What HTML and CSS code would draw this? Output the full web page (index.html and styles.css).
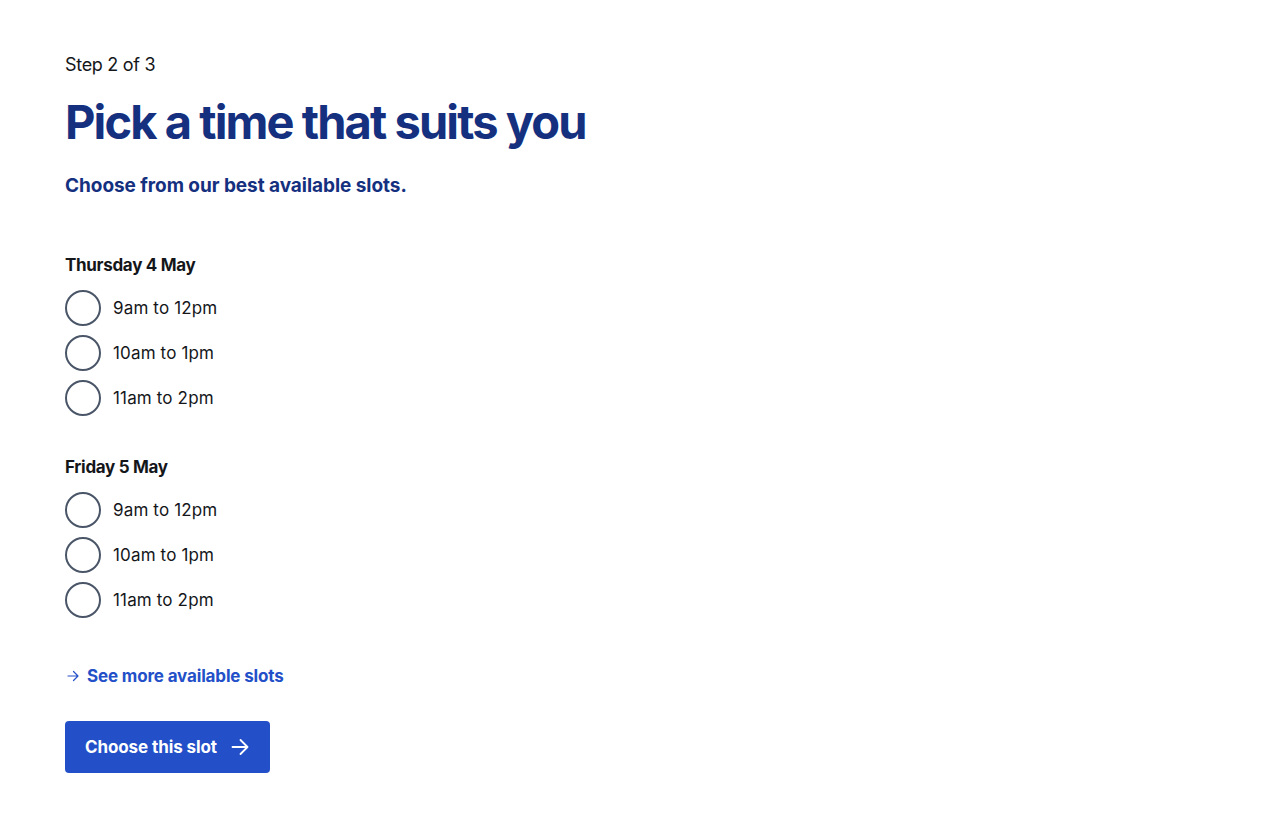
FILE: index.html
```html
<!DOCTYPE html>
<html lang="en">
<head>
<meta charset="utf-8">
<title>Pick a time</title>
<link rel="stylesheet" href="styles.css">
</head>
<body>
<main class="page">
  <p class="step">Step 2 of 3</p>
  <h1 class="title">Pick a time that suits you</h1>
  <p class="lead">Choose from our best available slots.</p>

  <fieldset class="group">
    <legend class="day">Thursday 4 May</legend>
    <label class="slot"><input type="radio" name="slot"><span class="dot"></span><span>9am to 12pm</span></label>
    <label class="slot"><input type="radio" name="slot"><span class="dot"></span><span>10am to 1pm</span></label>
    <label class="slot"><input type="radio" name="slot"><span class="dot"></span><span>11am to 2pm</span></label>
  </fieldset>

  <fieldset class="group">
    <legend class="day">Friday 5 May</legend>
    <label class="slot"><input type="radio" name="slot"><span class="dot"></span><span>9am to 12pm</span></label>
    <label class="slot"><input type="radio" name="slot"><span class="dot"></span><span>10am to 1pm</span></label>
    <label class="slot"><input type="radio" name="slot"><span class="dot"></span><span>11am to 2pm</span></label>
  </fieldset>

  <a class="more" href="#">
    <svg width="12" height="12" viewBox="0 0 12 12" fill="none" stroke="currentColor" stroke-width="1.2" stroke-linecap="round" stroke-linejoin="round"><path d="M1 6h10M6.5 1.5 11 6l-4.5 4.5"/></svg>
    <span>See more available slots</span>
  </a>

  <button class="btn" type="button">
    <span>Choose this slot</span>
    <svg width="18" height="18" viewBox="0 0 18 18" fill="none" stroke="currentColor" stroke-width="1.8" stroke-linecap="round" stroke-linejoin="round"><path d="M1.5 9h15M9.5 2l7 7-7 7"/></svg>
  </button>
</main>
</body>
</html>
```

FILE: styles.css
```css
* { box-sizing: border-box; }
html, body { margin: 0; padding: 0; background: #fff; }
body {
  font-family: Inter, "Noto Sans", sans-serif;
  color: #14161a;
}
.page {
  padding: 52px 64px 40px 65px;
  display: flex;
  flex-direction: column;
  align-items: flex-start;
}
.step {
  margin: 0;
  font-size: 18px;
  line-height: 26px;
  letter-spacing: -0.3px;
}
.title {
  margin: 14px 0 0;
  font-size: 47px;
  line-height: 60px;
  font-weight: 700;
  letter-spacing: -1.9px;
  color: #14307f;
}
.lead {
  margin: 21px 0 0;
  font-size: 19px;
  line-height: 26px;
  font-weight: 700;
  letter-spacing: -0.05px;
  color: #14307f;
}
.group {
  border: 0;
  margin: 55px 0 0;
  padding: 0;
  min-width: 0;
  display: flex;
  flex-direction: column;
  gap: 9px;
}
.group + .group { margin-top: 40px; }
.day {
  padding: 0;
  margin-bottom: 5px;
  font-size: 17px;
  line-height: 22px;
  font-weight: 700;
  letter-spacing: -0.3px;
  float: left;
}
.group .day + .slot { clear: both; }
.slot {
  display: flex;
  align-items: center;
  gap: 12px;
  font-size: 17px;
  line-height: 36px;
  letter-spacing: 0.15px;
  cursor: pointer;
}
.slot input { position: absolute; opacity: 0; width: 0; height: 0; margin: 0; }
.dot {
  width: 36px;
  height: 36px;
  border: 2px solid #4a5668;
  border-radius: 50%;
  flex: none;
  background: #fff;
}
.more {
  margin-top: 47px;
  display: flex;
  align-items: center;
  gap: 8px;
  color: #2350c8;
  font-size: 17px;
  line-height: 22px;
  font-weight: 700;
  letter-spacing: -0.15px;
  text-decoration: none;
  padding-left: 2px;
}
.btn {
  margin-top: 34px;
  display: flex;
  align-items: center;
  gap: 14px;
  height: 52px;
  padding: 0 21px 0 20px;
  background: #2350c8;
  color: #fff;
  border: 0;
  border-radius: 4px;
  font-family: inherit;
  font-size: 17px;
  font-weight: 700;
  letter-spacing: -0.1px;
  cursor: pointer;
}
```
